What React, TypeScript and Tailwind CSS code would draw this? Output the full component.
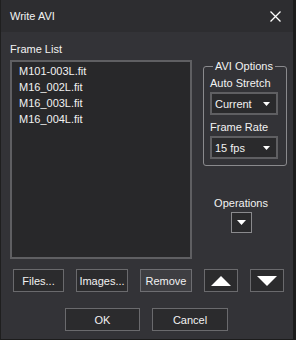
import React from "react";

const Tri = ({ w, h, up }: { w: number; h: number; up?: boolean }) => (
  <svg width={w} height={h} viewBox={`0 0 ${w} ${h}`}>
    {up ? (
      <polygon points={`0,${h} ${w},${h} ${w / 2},0`} fill="#ffffff" />
    ) : (
      <polygon points={`0,0 ${w},0 ${w / 2},${h}`} fill="#ffffff" />
    )}
  </svg>
);

const Select = ({ value }: { value: string }) => (
  <div className="w-[68px] h-[23px] border-2 border-[#5f5f62] bg-[#2a2a2c] flex items-center justify-between pl-[3px] pr-[6px]">
    <span>{value}</span>
    <Tri w={7} h={4} />
  </div>
);

const Btn = ({ children, w, hl }: { children: React.ReactNode; w: string; hl?: boolean }) => (
  <div
    className={`${w} h-[23px] border flex items-center justify-center ${
      hl ? "bg-[#3e3e42] border-[#6e6e72]" : "bg-[#2b2b2d] border-[#6a6a6d]"
    }`}
  >
    {children}
  </div>
);

export default function App() {
  return (
    <div
      className="w-[296px] h-[340px] bg-[#1c1c1c] text-[#f2f2f2] text-[11px] leading-[16px]"
      style={{ fontFamily: '"Liberation Sans", Arial, sans-serif' }}
    >
      <div className="w-[293px] h-[339px] bg-[#333337] border-l border-[#1f1f1f] flex flex-col">
        <div className="h-[32px] bg-[#2d2d30] flex items-center justify-between pl-[9px] pr-[12px]">
          <span>Write AVI</span>
          <svg width="11" height="11" viewBox="0 0 11 11">
            <path d="M0.5 0.5 L10.5 10.5 M10.5 0.5 L0.5 10.5" stroke="#ffffff" strokeWidth="1.3" />
          </svg>
        </div>
        <div className="flex pt-[9px] pl-[9px]">
          <div className="flex flex-col w-[182px]">
            <div className="mb-[3px]">Frame List</div>
            <div className="h-[199px] border-2 border-[#5f5f62] bg-[#28282a] pt-[1px] pl-[7px]">
              <div>M101-003L.fit</div>
              <div>M16_002L.fit</div>
              <div>M16_003L.fit</div>
              <div>M16_004L.fit</div>
            </div>
          </div>
          <div className="flex flex-col ml-[11px] pt-[17px]">
            <fieldset className="w-[84px] border border-[#8a8a8d] rounded-[3px] pl-[6px] pb-[6px]">
              <legend className="ml-[3px] px-[2px]">AVI Options</legend>
              <div className="mt-[1px]">Auto Stretch</div>
              <div className="mt-[1px]">
                <Select value="Current" />
              </div>
              <div className="mt-[4px]">Frame Rate</div>
              <div className="mt-[1px]">
                <Select value="15 fps" />
              </div>
            </fieldset>
            <div className="ml-[8px] w-[60px] flex flex-col items-center mt-[29px]">
              <div>Operations</div>
              <div className="mt-[1px] w-[21px] h-[21px] border border-[#8a8a8d] bg-[#2a2a2c] flex items-center justify-center">
                <Tri w={9} h={5} />
              </div>
            </div>
          </div>
        </div>
        <div className="flex pl-[12px] mt-[10px] gap-[12px]">
          <Btn w="w-[51px]">Files...</Btn>
          <Btn w="w-[52px]">Images...</Btn>
          <Btn w="w-[52px]" hl>
            Remove
          </Btn>
          <Btn w="w-[34px]">
            <Tri w={20} h={10} up />
          </Btn>
          <Btn w="w-[34px]">
            <Tri w={20} h={10} />
          </Btn>
        </div>
        <div className="flex pl-[64px] mt-[16px] gap-[12px]">
          <Btn w="w-[75px]">OK</Btn>
          <Btn w="w-[76px]">Cancel</Btn>
        </div>
      </div>
    </div>
  );
}
